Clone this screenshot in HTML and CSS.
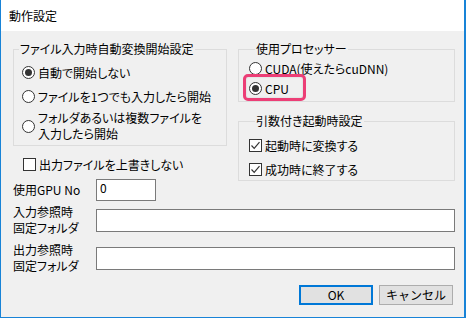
FILE: index.html
```html
<!DOCTYPE html>
<html lang="ja">
<head>
    <meta charset="UTF-8">
    <link rel="stylesheet" href="styles.css">
</head>
<body>
    <div class="window">
        <div class="titlebar">動作設定</div>
        <div class="dialog">
            <div class="top">
                <div class="left-col">
                    <fieldset class="group group-auto">
                        <legend>ファイル入力時自動変換開始設定</legend>
                        <div class="radio-list">
                            <div class="option"><span class="radio checked"></span>自動で開始しない</div>
                            <div class="option"><span class="radio"></span>ファイルを1つでも入力したら開始</div>
                            <div class="option two-line"><span class="radio"></span><span>フォルダあるいは複数ファイルを<br>入力したら開始</span></div>
                        </div>
                    </fieldset>
                    <div class="option check-row"><span class="check"></span>出力ファイルを上書きしない</div>
                    <div class="field-row gpu-row">
                        <label class="field-label">使用GPU No</label>
                        <input type="text" class="text-box gpu-box" value="0">
                    </div>
                </div>
                <div class="right-col">
                    <fieldset class="group group-proc">
                        <legend>使用プロセッサー</legend>
                        <div class="option small"><span class="radio"></span>CUDA(使えたらcuDNN)</div>
                        <div class="option small cpu"><span class="radio checked"></span>CPU<span class="highlight"></span></div>
                    </fieldset>
                    <fieldset class="group group-args">
                        <legend>引数付き起動時設定</legend>
                        <div class="option small"><span class="check checked"></span>起動時に変換する</div>
                        <div class="option small"><span class="check checked"></span>成功時に終了する</div>
                    </fieldset>
                </div>
            </div>
            <div class="field-row folder-row first">
                <label class="field-label">入力参照時<br>固定フォルダ</label>
                <input type="text" class="text-box wide">
            </div>
            <div class="field-row folder-row">
                <label class="field-label">出力参照時<br>固定フォルダ</label>
                <input type="text" class="text-box wide">
            </div>
            <div class="buttons">
                <button class="btn default">OK</button>
                <button class="btn">キャンセル</button>
            </div>
        </div>
    </div>
</body>
</html>
```

FILE: styles.css
```css
body {
    margin: 0;
    font-family: "Noto Sans CJK JP", sans-serif;
    font-size: 12px;
    font-feature-settings: "palt";
    color: #000;
}

.window {
    width: 466px;
    height: 318px;
    box-sizing: border-box;
    border-left: 1px solid #1883d7;
    border-right: 2px solid #1883d7;
    border-bottom: 1px solid #1883d7;
    background-color: #f0f0f0;
}

.titlebar {
    height: 31px;
    background-color: #fff;
    padding-left: 8px;
    display: flex;
    align-items: center;
}

.dialog {
    padding: 10px 9px 0 12px;
}

.top {
    display: flex;
    gap: 11px;
}

.left-col {
    width: 214px;
}

.right-col {
    width: 217px;
}

/* グループボックス */
.group {
    margin: 0;
    padding: 0;
    border: 1px solid #dcdcdc;
    min-width: 0;
}

.group legend {
    padding: 0 1px;
    line-height: 16px;
}

.group-auto legend {
    margin-left: 5px;
}

.group-proc legend,
.group-args legend {
    margin-left: 6px;
}

.radio-list {
    padding: 3px 0 3px 8px;
}

.option {
    display: flex;
    align-items: center;
    height: 24px;
    white-space: nowrap;
}

.option.two-line {
    height: 32px;
    margin-top: 2px;
    line-height: 16px;
}

.radio {
    box-sizing: border-box;
    width: 13px;
    height: 13px;
    border: 1px solid #333;
    border-radius: 50%;
    background-color: #fff;
    margin-right: 3px;
    flex-shrink: 0;
    display: flex;
    align-items: center;
    justify-content: center;
}

.radio.checked::after {
    content: "";
    width: 7px;
    height: 7px;
    border-radius: 50%;
    background-color: #333;
}

.check {
    box-sizing: border-box;
    width: 13px;
    height: 13px;
    border: 1px solid #333;
    background-color: #fff;
    margin-right: 3px;
    flex-shrink: 0;
}

.check.checked {
    background: #fff url("data:image/svg+xml;utf8,<svg xmlns='http://www.w3.org/2000/svg' width='11' height='11'><path d='M1.5 5.5 L4.2 8.3 L9.5 2.2' fill='none' stroke='%23333' stroke-width='1.2'/></svg>") no-repeat center;
}

.check-row {
    margin-top: 6px;
    padding-left: 10px;
}

/* 使用プロセッサー */
.group-proc {
    padding: 1px 0 3px 10px;
}

.group-proc .option.small {
    height: 20px;
}

.cpu {
    position: relative;
}

.highlight {
    position: absolute;
    left: -6px;
    top: -4px;
    width: 57px;
    height: 21px;
    border: 3px solid #ec3e76;
    border-radius: 5px;
    box-shadow: inset 0 0 2px rgba(0, 0, 0, 0.15);
}

/* 引数付き起動時設定 */
.group-args {
    margin-top: 11px;
    padding: 5px 0 0 10px;
}

.group-args .option.small {
    height: 22px;
    margin-bottom: 2px;
}

.group-args .option.small:last-of-type {
    margin-bottom: 0;
}

/* 入力欄 */
.field-row {
    display: flex;
    align-items: center;
}

.field-label {
    width: 83px;
    line-height: 16px;
    flex-shrink: 0;
}

.text-box {
    box-sizing: border-box;
    height: 23px;
    border: 1px solid #7a7a7a;
    background-color: #fff;
    font-family: "Noto Sans CJK JP", sans-serif;
    font-size: 12px;
    padding: 0 3px 6px;
    margin: 0;
    outline: none;
}

.gpu-row {
    margin-top: 3px;
}

.gpu-box {
    width: 60px;
    height: 22px;
}

.folder-row {
    height: 32px;
    margin-top: 6px;
}

.folder-row.first {
    margin-top: 3px;
}

.wide {
    flex: 1;
}

.buttons {
    display: flex;
    justify-content: flex-end;
    gap: 6px;
    margin-top: 11px;
    padding-right: 2px;
}

.btn {
    box-sizing: border-box;
    width: 74px;
    height: 20px;
    border: 1px solid #adadad;
    background-color: #e1e1e1;
    font-family: "Noto Sans CJK JP", sans-serif;
    font-size: 12px;
    padding: 0;
    line-height: 16px;
}

.btn.default {
    border: 2px solid #0078d7;
}
```
